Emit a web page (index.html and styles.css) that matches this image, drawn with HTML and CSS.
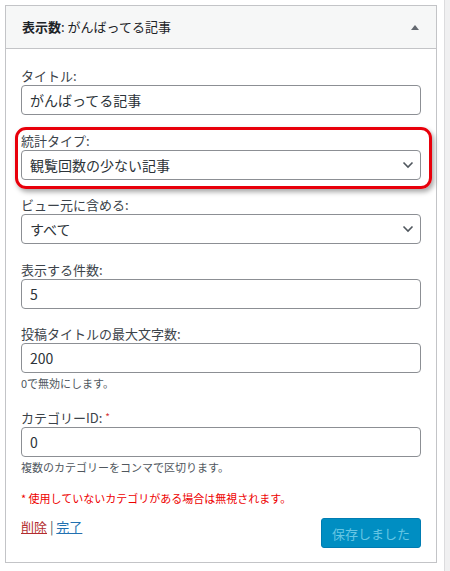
FILE: index.html
```html
<!DOCTYPE html>
<html lang="ja">
<head>
<meta charset="utf-8">
<title>ウィジェット</title>
<link rel="stylesheet" href="styles.css">
</head>
<body>
<div class="main">
  <div class="widget">
    <div class="widget-top">
      <h3 class="widget-title">表示数<span class="in-title">: がんばってる記事</span></h3>
      <span class="toggle" aria-hidden="true"></span>
    </div>
    <div class="widget-content">
      <div class="field">
        <label class="lbl" for="f-title">タイトル:</label>
        <input class="ctl" id="f-title" type="text" value="がんばってる記事">
      </div>
      <div class="field highlighted">
        <label class="lbl" for="f-type">統計タイプ:</label>
        <div class="select-wrap">
          <select class="ctl sel" id="f-type"><option>観覧回数の少ない記事</option></select>
          <svg class="chev" width="12" height="8" viewBox="0 0 12 8"><path d="M1.5 1.5l4.5 4.5 4.5-4.5" fill="none" stroke="#50575e" stroke-width="1.6"/></svg>
        </div>
        <span class="mark" aria-hidden="true"></span>
      </div>
      <div class="field">
        <label class="lbl" for="f-view">ビュー元に含める:</label>
        <div class="select-wrap">
          <select class="ctl sel" id="f-view"><option>すべて</option></select>
          <svg class="chev" width="12" height="8" viewBox="0 0 12 8"><path d="M1.5 1.5l4.5 4.5 4.5-4.5" fill="none" stroke="#50575e" stroke-width="1.6"/></svg>
        </div>
      </div>
      <div class="field">
        <label class="lbl" for="f-num">表示する件数:</label>
        <input class="ctl" id="f-num" type="text" value="5">
      </div>
      <div class="field">
        <label class="lbl" for="f-len">投稿タイトルの最大文字数:</label>
        <input class="ctl" id="f-len" type="text" value="200">
        <p class="desc">0で無効にします。</p>
      </div>
      <div class="field">
        <label class="lbl" for="f-cat">カテゴリーID: <span class="req">*</span></label>
        <input class="ctl" id="f-cat" type="text" value="0">
        <p class="desc">複数のカテゴリーをコンマで区切ります。</p>
      </div>
      <p class="note">* 使用していないカテゴリがある場合は無視されます。</p>
      <div class="actions">
        <div class="links"><a class="del" href="#">削除</a> | <a class="done" href="#">完了</a></div>
        <button class="btn" type="button" disabled>保存しました</button>
      </div>
    </div>
  </div>
</div>
<div class="side"></div>
</body>
</html>
```
FILE: styles.css
```css
* { box-sizing: border-box; }
html, body { margin: 0; padding: 0; background: #fff; }
body {
  display: flex;
  height: 571px;
  overflow: hidden;
  font-family: "Noto Sans CJK JP", "Noto Sans", sans-serif;
  font-size: 13px;
  color: #3c434a;
}
.main { padding: 5px 0 0 5px; width: 444px; }
.side { width: 6px; border-left: 1px solid #dcdcde; background: #f0f0f1; }
.widget { width: 432px; border: 1px solid #c3c4c7; background: #fff; }
.widget-top {
  height: 43px;
  background: #f6f7f7;
  border-bottom: 1px solid #c3c4c7;
  display: flex;
  align-items: center;
  justify-content: space-between;
  padding: 0 17px 0 16px;
}
.widget-title {
  margin: 0;
  font-size: 13px;
  font-weight: 700;
  line-height: 42px;
  color: #1d2327;
}
.in-title { font-weight: 400; }
.toggle {
  width: 0; height: 0;
  border-left: 4px solid transparent;
  border-right: 4px solid transparent;
  border-bottom: 5px solid #646970;
}
.widget-content { padding: 17px 15px 14px; }
.field { margin-bottom: 15.5px; position: relative; }
.lbl { display: block; line-height: 19px; color: #3c434a; }
.ctl {
  display: block;
  width: 400px;
  height: 30px;
  margin: 0;
  padding: 0 8px;
  border: 1px solid #8c8f94;
  border-radius: 4px;
  background: #fff;
  font-family: inherit;
  font-size: 14px;
  color: #2c3338;
  outline: none;
}
.select-wrap { position: relative; width: 400px; }
.sel { appearance: none; -webkit-appearance: none; padding-right: 24px; }
.chev { position: absolute; right: 7px; top: 11px; pointer-events: none; }
.mark {
  position: absolute;
  left: -6px; top: -4px;
  width: 417px; height: 62px;
  border: 3.5px solid #e8000b;
  border-radius: 11px;
  box-shadow: 2px 3px 5px rgba(0,0,0,0.35);
  pointer-events: none;
}
.desc { margin: 2px 0 0; font-size: 11px; line-height: 16px; color: #50575e; }
.field:has(.desc) { margin-bottom: 15.5px; }
.req { color: #d63638; font-size: 10px; vertical-align: 2px; }
.note { margin: 2px 0 0; font-size: 11px; line-height: 16px; color: #e00; }
.actions { display: flex; justify-content: space-between; align-items: flex-start; margin-top: 12px; }
.links { line-height: 18px; color: #50575e; }
.links a { text-decoration: underline; }
.del { color: #b32d2e; }
.done { color: #2271b1; }
.btn {
  width: 100px;
  height: 30px;
  padding: 0 10px;
  border: 1px solid #007cb2;
  border-radius: 3px;
  background: #008ec2;
  color: #66c6e4;
  font-family: inherit;
  font-size: 13px;
}
```
